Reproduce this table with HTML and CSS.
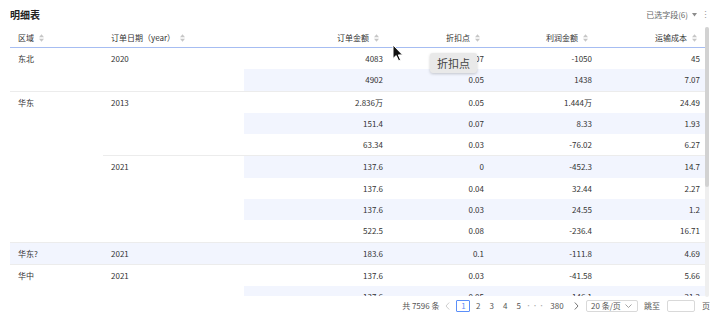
FILE: index.html
```html
<!DOCTYPE html>
<html lang="zh-CN">
<head>
  <meta charset="UTF-8" />
  <title>明细表</title>
  <link rel="stylesheet" href="styles.css">
</head>
<body>
  <div class="panel">
    <div class="title-bar">
      <div class="title">明细表</div>
      <div class="fields">
        已选字段(6)
        <svg class="caret" width="5" height="4" viewBox="0 0 5 4"><path d="M0 0h5L2.5 3.5z" fill="#8c8c8c"/></svg>
        <span class="more">⋮</span>
      </div>
    </div>

    <div class="table-area">
      <div class="table-wrap">
        <table class="grid">
          <colgroup>
            <col style="width:93px"><col style="width:141px"><col style="width:147px">
            <col style="width:101px"><col style="width:108px"><col style="width:105px">
          </colgroup>
          <thead>
            <tr>
              <th>区域<svg class="sort" width="5" height="8" viewBox="0 0 5 8"><path d="M0 3.3L2.5 0.3L5 3.3zM0 4.7L5 4.7L2.5 7.7z" fill="#c6c6c6"/></svg></th>
              <th>订单日期（year）<svg class="sort" width="5" height="8" viewBox="0 0 5 8"><path d="M0 3.3L2.5 0.3L5 3.3zM0 4.7L5 4.7L2.5 7.7z" fill="#c6c6c6"/></svg></th>
              <th class="num">订单金额<svg class="sort" width="5" height="8" viewBox="0 0 5 8"><path d="M0 3.3L2.5 0.3L5 3.3zM0 4.7L5 4.7L2.5 7.7z" fill="#c6c6c6"/></svg></th>
              <th class="num">折扣点<svg class="sort" width="5" height="8" viewBox="0 0 5 8"><path d="M0 3.3L2.5 0.3L5 3.3zM0 4.7L5 4.7L2.5 7.7z" fill="#c6c6c6"/></svg></th>
              <th class="num">利润金额<svg class="sort" width="5" height="8" viewBox="0 0 5 8"><path d="M0 3.3L2.5 0.3L5 3.3zM0 4.7L5 4.7L2.5 7.7z" fill="#c6c6c6"/></svg></th>
              <th class="num last">运输成本<svg class="sort" width="5" height="8" viewBox="0 0 5 8"><path d="M0 3.3L2.5 0.3L5 3.3zM0 4.7L5 4.7L2.5 7.7z" fill="#c6c6c6"/></svg></th>
            </tr>
          </thead>
          <tbody>
            <tr>
              <td rowspan="2" class="end">东北</td>
              <td rowspan="2" class="end">2020</td>
              <td class="num">4083</td><td class="num">0.07</td><td class="num">-1050</td><td class="num last">45</td>
            </tr>
            <tr class="odd">
              <td class="num end">4902</td><td class="num end">0.05</td><td class="num end">1438</td><td class="num last end">7.07</td>
            </tr>
            <tr>
              <td rowspan="7" class="end">华东</td>
              <td rowspan="3" class="end">2013</td>
              <td class="num">2.836万</td><td class="num">0.05</td><td class="num">1.444万</td><td class="num last">24.49</td>
            </tr>
            <tr class="odd">
              <td class="num">151.4</td><td class="num">0.07</td><td class="num">8.33</td><td class="num last">1.93</td>
            </tr>
            <tr>
              <td class="num end">63.34</td><td class="num end">0.03</td><td class="num end">-76.02</td><td class="num last end">6.27</td>
            </tr>
            <tr class="odd">
              <td rowspan="4" class="end">2021</td>
              <td class="num">137.6</td><td class="num">0</td><td class="num">-452.3</td><td class="num last">14.7</td>
            </tr>
            <tr>
              <td class="num">137.6</td><td class="num">0.04</td><td class="num">32.44</td><td class="num last">2.27</td>
            </tr>
            <tr class="odd">
              <td class="num">137.6</td><td class="num">0.03</td><td class="num">24.55</td><td class="num last">1.2</td>
            </tr>
            <tr>
              <td class="num end">522.5</td><td class="num end">0.08</td><td class="num end">-236.4</td><td class="num last end">16.71</td>
            </tr>
            <tr class="odd full">
              <td class="end">华东?</td><td class="end">2021</td>
              <td class="num end">183.6</td><td class="num end">0.1</td><td class="num end">-111.8</td><td class="num last end">4.69</td>
            </tr>
            <tr>
              <td rowspan="2">华中</td>
              <td rowspan="2">2021</td>
              <td class="num">137.6</td><td class="num">0.03</td><td class="num">-41.58</td><td class="num last">5.66</td>
            </tr>
            <tr class="odd">
              <td class="num">137.6</td><td class="num">0.05</td><td class="num">-146.1</td><td class="num last">21.2</td>
            </tr>
          </tbody>
        </table>
      </div>
      <div class="scrollbar"><div class="thumb"></div></div>
    </div>

    <div class="pager">
      <span class="total">共 7596 条</span>
      <span class="page arrow prev"><svg width="5" height="8" viewBox="0 0 5 8"><path d="M4.2 0.5L1 4L4.2 7.5" fill="none" stroke="#c8c8c8" stroke-width="0.9"/></svg></span>
      <span class="page current">1</span>
      <span class="page">2</span>
      <span class="page">3</span>
      <span class="page">4</span>
      <span class="page">5</span>
      <span class="page dots">•••</span>
      <span class="page wide">380</span>
      <span class="page arrow next"><svg width="5" height="8" viewBox="0 0 5 8"><path d="M0.8 0.5L4 4L0.8 7.5" fill="none" stroke="#666" stroke-width="0.9"/></svg></span>
      <span class="size-select">20 条/页
        <svg width="7" height="4" viewBox="0 0 7 4"><path d="M0.5 0.5L3.5 3.5L6.5 0.5" fill="none" stroke="#8c8c8c" stroke-width="0.8"/></svg>
      </span>
      <span class="jump">跳至</span>
      <span class="jump-input"></span>
      <span class="jump-unit">页</span>
    </div>
  </div>

  <div class="tooltip">折扣点</div>
  <svg class="cursor" width="12" height="18" viewBox="0 0 12 18">
    <path d="M1 1L1 14.5L4.2 11.6L6.6 16.8L8.6 15.9L6.3 10.9L10.6 10.9Z" fill="#111" stroke="#fff" stroke-width="1"/>
  </svg>
</body>
</html>
```

FILE: styles.css
```css
body {
  margin: 0;
  background: #fff;
  font-family: "Noto Sans CJK SC", "Noto Sans", sans-serif;
  color: #333;
}

.panel {
  width: 700px;
  padding: 0 11px 0 10px;
}

.title-bar {
  height: 27px;
  display: flex;
  justify-content: space-between;
  align-items: center;
  padding-top: 2px;
  box-sizing: border-box;
}

.title {
  font-size: 10px;
  font-weight: bold;
  color: #222;
}

.fields {
  display: flex;
  align-items: center;
  font-size: 8px;
  color: #666;
}

.fields .caret {
  margin-left: 4px;
}

.fields .more {
  margin-left: 4px;
  color: #999;
  font-size: 9px;
}

.table-area {
  display: flex;
  height: 269px;
}

.table-wrap {
  width: 695px;
  overflow: hidden;
}

.scrollbar {
  width: 4px;
  background: #efefef;
  border-radius: 2px;
  height: 270px;
}

.scrollbar .thumb {
  height: 160px;
  background: #d2d2d2;
  border-radius: 2px;
}

.grid {
  width: 695px;
  table-layout: fixed;
  border-collapse: separate;
  border-spacing: 0;
  font-size: 8px;
}

.grid th {
  height: 20px;
  padding: 0 8px;
  font-weight: normal;
  text-align: left;
  color: #333;
  border-bottom: 1px solid #a6bdf2;
  white-space: nowrap;
}

.grid td {
  padding: 0 8px;
  line-height: 21.3px;
  vertical-align: top;
  white-space: nowrap;
  background: #fff;
}

.grid .num {
  text-align: right;
}

.grid th.num {
  padding-right: 12px;
}

.grid td.last {
  padding-right: 5px;
}

.grid th.last {
  padding-right: 8px;
}

.grid tr.odd td.num,
.grid tr.full td {
  background: #f2f5fe;
}

.grid td.end {
  border-bottom: 1px solid #ececec;
}

.sort {
  margin-left: 5px;
  vertical-align: -1px;
}

.pager {
  height: 20px;
  display: flex;
  align-items: center;
  justify-content: flex-end;
  font-size: 8px;
  line-height: 12px;
  color: #555;
}

.pager .page {
  min-width: 13.5px;
  text-align: center;
  box-sizing: border-box;
}

.pager .arrow {
  min-width: 11px;
  height: 12px;
  display: flex;
  align-items: center;
  justify-content: center;
}

.pager .prev {
  margin: 0 3px;
}

.pager .next {
  margin-left: 2px;
}

.pager .current {
  min-width: 14px;
  height: 12px;
  margin-right: 1px;
  line-height: 10px;
  border: 1px solid #5b8ff9;
  border-radius: 1px;
  color: #5b8ff9;
}

.pager .dots {
  min-width: 17px;
  color: #aaa;
  font-size: 6px;
  letter-spacing: 0.5px;
}

.pager .wide {
  min-width: 24px;
}

.size-select {
  margin-left: 4px;
  width: 52px;
  height: 12px;
  box-sizing: border-box;
  border: 1px solid #d9d9d9;
  border-radius: 2px;
  display: flex;
  align-items: center;
  justify-content: space-between;
  padding: 0 5px 0 4px;
}

.jump {
  margin-left: 6px;
}

.jump-input {
  margin-left: 7px;
  width: 28px;
  height: 12px;
  box-sizing: border-box;
  border: 1px solid #d9d9d9;
  border-radius: 2px;
}

.jump-unit {
  margin-left: 7px;
}

.tooltip {
  position: absolute;
  left: 430px;
  top: 53px;
  width: 47px;
  height: 20px;
  line-height: 20px;
  text-align: center;
  font-size: 11px;
  color: #444;
  background: #e9e9e9;
  border-radius: 3px;
  box-shadow: 0 1px 3px rgba(0, 0, 0, 0.2);
}

.cursor {
  position: absolute;
  left: 392px;
  top: 44px;
}
```
